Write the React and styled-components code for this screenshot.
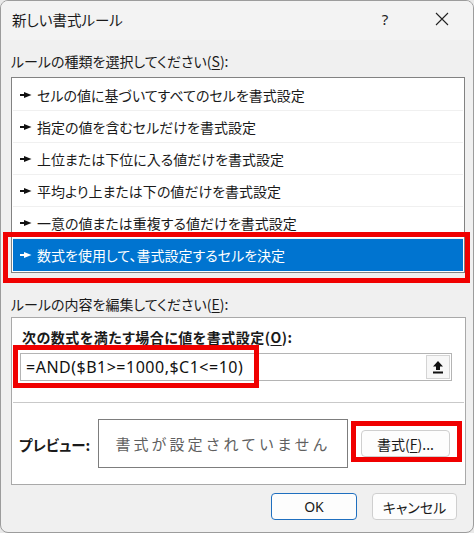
import React from "react";
import styled, { createGlobalStyle } from "styled-components";

const GlobalStyle = createGlobalStyle`
  html, body {
    margin: 0;
    padding: 0;
    background: #e9e9e9;
  }
  * {
    box-sizing: border-box;
  }
`;

const jp = `"Noto Sans CJK JP", "Noto Sans", sans-serif`;
const ui = `"Noto Sans", "Noto Sans CJK JP", sans-serif`;

const Dialog = styled.div`
  width: 474px;
  height: 533px;
  background: #f0f0f0;
  border: 1px solid #9c9c9c;
  border-radius: 8px;
  overflow: hidden;
  display: flex;
  flex-direction: column;
  font-family: ${jp};
  font-feature-settings: "palt";
  color: #1a1a1a;
`;

const TitleBar = styled.div`
  height: 39px;
  display: flex;
  align-items: center;
  padding-left: 11px;
  padding-right: 8px;
  background: #f3f3f3;
`;

const Title = styled.div`
  flex: 1;
  font-size: 14.5px;
  margin-top: -2px;
`;

const CaptionButton = styled.div`
  width: 46px;
  height: 36px;
  display: flex;
  align-items: center;
  justify-content: center;
  font-family: ${ui};
  font-size: 15px;
  color: #222;
  margin-left: ${(p) => p.$gap || 0}px;
  margin-top: -3px;
`;

const Body = styled.div`
  flex: 1;
  display: flex;
  flex-direction: column;
  padding: 0 9px 0 10px;
`;

const SectionLabel = styled.div`
  font-size: 14px;
  height: 24px;
  line-height: 24px;
  margin-top: ${(p) => p.$top}px;
  margin-bottom: ${(p) => p.$bottom || 0}px;
  white-space: nowrap;
`;

const Key = styled.span`
  text-decoration: underline;
  text-underline-offset: 2px;
`;

const RuleList = styled.div`
  width: 454px;
  height: 196px;
  border: 1px solid #828282;
  background: #fff;
  padding: 1px 1px 0 1px;
  display: flex;
  flex-direction: column;
`;

const RuleRow = styled.div`
  position: relative;
  height: 32px;
  flex: none;
  display: flex;
  align-items: center;
  padding-left: 7px;
  gap: 5px;
  font-size: 14px;
  white-space: nowrap;
  background: ${(p) => (p.$selected ? "#0074d0" : "transparent")};
  color: ${(p) => (p.$selected ? "#fff" : "#1a1a1a")};
  border-bottom: 1px solid ${(p) => (p.$selected ? "#0074d0" : "#f0f0f0")};

  span {
    margin-top: 1px;
  }
`;

const RedMark = styled.div`
  position: absolute;
  left: ${(p) => p.$l}px;
  top: ${(p) => p.$t}px;
  width: ${(p) => p.$w}px;
  height: ${(p) => p.$h}px;
  border: 5px solid #f00000;
  pointer-events: none;
`;

const Group = styled.div`
  width: 455px;
  height: 168px;
  background: #fff;
  border: 1px solid #a9a9a9;
  display: flex;
  flex-direction: column;
`;

const FormulaArea = styled.div`
  height: 85px;
  padding: 7px 12px 0 7px;
  border-bottom: 1px solid #c9c9c9;
  margin: 0 1px;
`;

const BoldLabel = styled.div`
  font-size: 14px;
  font-weight: 700;
  letter-spacing: 0.5px;
  height: 24px;
  line-height: 24px;
  padding-left: 2px;
  margin-bottom: 4px;
  white-space: nowrap;
`;

const FormulaInput = styled.div`
  position: relative;
  height: 28px;
  border: 1px solid #b4b4b4;
  display: flex;
  align-items: center;
  padding: 0 1px 0 5px;
`;

const FormulaText = styled.div`
  flex: 1;
  font-family: ${ui};
  font-size: 16px;
  letter-spacing: 0.5px;
  color: #111;
`;

const CollapseButton = styled.div`
  width: 24px;
  height: 24px;
  border: 1px solid #d4d4d4;
  background: #f7f7f7;
  display: flex;
  align-items: center;
  justify-content: center;
`;

const PreviewRow = styled.div`
  flex: 1;
  display: flex;
  align-items: center;
  padding: 0 12px 0 7px;
  gap: 13px;
`;

const PreviewLabel = styled.div`
  width: 66px;
  font-size: 14.5px;
  font-weight: 700;
  margin-top: 2px;
  white-space: nowrap;
`;

const PreviewBox = styled.div`
  width: 250px;
  height: 49px;
  border: 1px solid #7d7d7d;
  display: flex;
  align-items: center;
  justify-content: center;
  font-size: 15px;
  letter-spacing: 3px;
  color: #5f5f5f;
  font-feature-settings: normal;
`;

const ButtonWrap = styled.div`
  position: relative;
`;

const Button = styled.div`
  width: ${(p) => p.$w}px;
  height: 27px;
  border: 1px solid ${(p) => (p.$primary ? "#1f6fbf" : "#cfcfcf")};
  border-radius: 4px;
  background: #fdfdfd;
  display: flex;
  align-items: center;
  justify-content: center;
  font-size: 14px;
  font-family: ${(p) => (p.$latin ? ui : jp)};
  color: #1a1a1a;
  white-space: nowrap;
`;

const Footer = styled.div`
  display: flex;
  justify-content: flex-end;
  gap: 15px;
  padding: 8px 7px 0 0;
`;

const Pointer = ({ color }) => (
  <svg width="12" height="8" viewBox="0 0 12 8">
    <rect x="0" y="3" width="6" height="2" fill={color} />
    <path d="M4 1 L11.5 4 L4 7 Z" fill={color} />
  </svg>
);

const CloseIcon = () => (
  <svg width="14" height="14" viewBox="0 0 14 14">
    <path d="M1 1 L13 13 M13 1 L1 13" stroke="#222" strokeWidth="1.1" />
  </svg>
);

const UpIcon = () => (
  <svg width="12" height="14" viewBox="0 0 12 14">
    <path d="M6 1 L11 6.5 H8 V10 H4 V6.5 H1 Z" fill="#111" />
    <rect x="1" y="11.5" width="10" height="2" fill="#111" />
  </svg>
);

const rules = [
  "セルの値に基づいてすべてのセルを書式設定",
  "指定の値を含むセルだけを書式設定",
  "上位または下位に入る値だけを書式設定",
  "平均より上または下の値だけを書式設定",
  "一意の値または重複する値だけを書式設定",
  "数式を使用して、書式設定するセルを決定",
];

export default function App() {
  return (
    <>
      <GlobalStyle />
      <Dialog>
        <TitleBar>
          <Title>新しい書式ルール</Title>
          <CaptionButton>?</CaptionButton>
          <CaptionButton $gap={11}>
            <CloseIcon />
          </CaptionButton>
        </TitleBar>
        <Body>
          <SectionLabel $top={9} $bottom={4}>
            ルールの種類を選択してください(<Key>S</Key>):
          </SectionLabel>
          <RuleList>
            {rules.map((r, i) => {
              const selected = i === rules.length - 1;
              return (
                <RuleRow key={r} $selected={selected}>
                  <Pointer color={selected ? "#fff" : "#111"} />
                  <span>{r}</span>
                  {selected && <RedMark $l={-10} $t={-7} $w={467} $h={51} />}
                </RuleRow>
              );
            })}
          </RuleList>
          <SectionLabel $top={19} $bottom={1}>
            ルールの内容を編集してください(<Key>E</Key>):
          </SectionLabel>
          <Group>
            <FormulaArea>
              <BoldLabel>
                次の数式を満たす場合に値を書式設定(<Key>O</Key>):
              </BoldLabel>
              <FormulaInput>
                <FormulaText>=AND($B1&gt;=1000,$C1&lt;=10)</FormulaText>
                <CollapseButton>
                  <UpIcon />
                </CollapseButton>
                <RedMark $l={-8} $t={-9} $w={246} $h={43} />
              </FormulaInput>
            </FormulaArea>
            <PreviewRow>
              <PreviewLabel>プレビュー:</PreviewLabel>
              <PreviewBox>書式が設定されていません</PreviewBox>
              <ButtonWrap>
                <Button $w={89}>
                  書式(<Key>F</Key>)...
                </Button>
                <RedMark $l={-10} $t={-9} $w={111} $h={41} />
              </ButtonWrap>
            </PreviewRow>
          </Group>
          <Footer>
            <Button $w={86} $primary $latin>
              OK
            </Button>
            <Button $w={85}>キャンセル</Button>
          </Footer>
        </Body>
      </Dialog>
    </>
  );
}
